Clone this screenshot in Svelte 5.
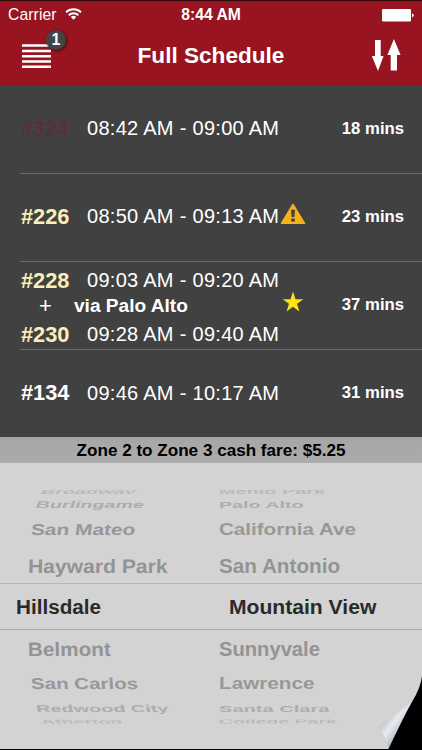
<script>
  let title = 'Full Schedule';
  let alerts = 1;
  let fare = 'Zone 2 to Zone 3 cash fare: $5.25';

  let trips = [
    { legs: [{ train: '#324', kind: 'bullet', time: '08:42 AM - 09:00 AM' }], mins: 18 },
    { legs: [{ train: '#226', kind: 'limited', time: '08:50 AM - 09:13 AM' }], mins: 23, icon: 'warning' },
    {
      legs: [
        { train: '#228', kind: 'limited', time: '09:03 AM - 09:20 AM' },
        { train: '#230', kind: 'limited', time: '09:28 AM - 09:40 AM' }
      ],
      via: 'via Palo Alto',
      mins: 37,
      icon: 'star'
    },
    { legs: [{ train: '#134', kind: 'local', time: '09:46 AM - 10:17 AM' }], mins: 31 }
  ];

  // one entry per visible step of the wheel, the scales squash the labels
  let stops = [
    { from: 'Broadway', to: 'Menlo Park', level: 'up4', fromX: 0.96, toX: 0.96, y: 0.34, skew: -14 },
    { from: 'Burlingame', to: 'Palo Alto', level: 'up3', fromX: 0.95, toX: 0.95, y: 0.48, skew: -10 },
    { from: 'San Mateo', to: 'California Ave', level: 'up2', fromX: 1.01, toX: 0.995, y: 0.76, skew: -5 },
    { from: 'Hayward Park', to: 'San Antonio', level: 'up1', fromX: 1.02, toX: 1, y: 0.94, skew: -1 },
    { from: 'Hillsdale', to: 'Mountain View', level: 'current', fromX: 1, toX: 1.02, y: 1, skew: 0 },
    { from: 'Belmont', to: 'Sunnyvale', level: 'down1', fromX: 1, toX: 0.975, y: 0.94, skew: 1 },
    { from: 'San Carlos', to: 'Lawrence', level: 'down2', fromX: 0.99, toX: 1, y: 0.76, skew: 3 },
    { from: 'Redwood City', to: 'Santa Clara', level: 'down3', fromX: 0.96, toX: 0.97, y: 0.48, skew: 6 },
    { from: 'Atherton', to: 'College Park', level: 'down4', fromX: 0.94, toX: 0.94, y: 0.34, skew: 8 }
  ];

  function squash(x, y, skew) {
    return `transform: scale(${x}, ${y}) skewX(${skew}deg)`;
  }
</script>

<div class="screen">
  <header>
    <div class="status">
      <span class="carrier">Carrier
        <svg width="17" height="12" viewBox="0 0 17 12" fill="none" stroke="#fff" stroke-width="2">
          <path d="M1 4.4A10.8 10.8 0 0 1 16 4.4" />
          <path d="M3.7 7.2A7 7 0 0 1 13.3 7.2" />
          <path d="M8.5 11.7L5.8 9A3.9 3.9 0 0 1 11.2 9Z" fill="#fff" stroke="none" />
        </svg>
      </span>
      <span class="clock">8:44 AM</span>
      <svg class="battery" width="32" height="13" viewBox="0 0 32 13" fill="#fff">
        <rect x="0" y="0" width="29" height="12.5" rx="1.3" />
        <path d="M30 4.2Q31.7 4.8 31.7 6.3T30 8.4Z" />
      </svg>
    </div>
    <nav>
      <div class="menu">
        <svg width="29" height="24" viewBox="0 0 29 24" stroke="#fff" stroke-width="2.5">
          <path d="M0 1.6H29M0 6.9H29M0 12.2H29M0 17.5H29M0 22.8H29" />
        </svg>
        <span class="badge">{alerts}</span>
      </div>
      <h1>{title}</h1>
      <svg class="swap" width="30" height="34" viewBox="0 0 30 34" fill="#fff">
        <path d="M4 1H9.700V17H12.600L7 32L.8 17H4Z" />
        <path d="M22.900 0L29.600 16H26V31.600H19.700V16H16.400Z" />
      </svg>
    </nav>
  </header>

  <ul>
    {#each trips as trip}
      <li>
        <div class="legs" class:double={trip.legs.length > 1}>
          {#each trip.legs as leg, i}
            {#if i > 0}
              <div class="via"><span>+</span>{trip.via}</div>
            {/if}
            <div class="leg">
              <span class="train {leg.kind}">{leg.train}</span>
              <span class="time">{leg.time}</span>
            </div>
          {/each}
        </div>
        <div class="mark {trip.icon}">
          {#if trip.icon === 'warning'}
            <svg width="26" height="22" viewBox="0 0 26 22">
              <path d="M13 1.6L24.3 20.2H1.7Z" fill="#f5b21a" stroke="#f5b21a" stroke-width="1.8" stroke-linejoin="round" />
              <path d="M11 6.8H15L14.4 14H11.6Z" fill="#414141" />
              <rect x="11.2" y="15.4" width="3.6" height="3.2" rx=".6" fill="#414141" />
            </svg>
          {:else if trip.icon === 'star'}
            <svg width="22" height="22" viewBox="0 0 22 22">
              <path d="M11 .6L13.5 8.2H21.4L15 12.8L17.4 20.5L11 15.8L4.6 20.5L7 12.8L.6 8.2H8.5Z" fill="#ffe414" />
            </svg>
          {/if}
        </div>
        <div class="mins">{trip.mins} mins</div>
      </li>
    {/each}
  </ul>

  <div class="fare">{fare}</div>

  <div class="picker">
    {#each stops as s}
      <div class="stop {s.level}">
        <span class="from" style={squash(s.fromX, s.y, s.skew)}>{s.from}</span>
        <span class="to" style={squash(s.toX, s.y, 0)}>{s.to}</span>
      </div>
    {/each}
    <svg class="curl" width="46" height="75" viewBox="0 0 46 75">
      <defs>
        <linearGradient id="page" x1="14" y1="42" x2="30" y2="54" gradientUnits="userSpaceOnUse">
          <stop offset="0" stop-color="#c9ced5" />
          <stop offset=".35" stop-color="#e6ebf0" />
          <stop offset=".65" stop-color="#ccd3da" />
          <stop offset="1" stop-color="#a5adb5" />
        </linearGradient>
      </defs>
      <path d="M37 26Q33 32 3.5 50.5Q2 52 3 54Q9 61 12.5 75L28 52Z" fill="url(#page)" />
      <path d="M46 2Q44.5 14 36.5 27Q28 42 12.5 75H46Z" fill="#000" />
    </svg>
  </div>
</div>

<style>
  :global(body) {
    margin: 0;
    background: #000;
  }

  .screen {
    width: 422px;
    height: 750px;
    overflow: hidden;
    display: flex;
    flex-direction: column;
    box-sizing: border-box;
    border-bottom: 1px solid #000;
    font-family: "Liberation Sans", Arial, sans-serif;
    color: #fff;
  }

  header {
    height: 86px;
    flex: none;
    box-sizing: border-box;
    border-top: 1px solid #30070b;
    background: #981421;
  }

  .status {
    display: grid;
    grid-template-columns: 1fr auto 1fr;
    align-items: center;
    height: 28px;
    padding: 0 8px;
    font-size: 15.7px;
  }

  .carrier {
    display: flex;
    align-items: center;
    gap: 8px;
    letter-spacing: 0.1px;
  }

  .carrier svg {
    margin-bottom: 3px;
  }

  .clock {
    font-weight: bold;
  }

  .battery {
    justify-self: end;
  }

  nav {
    display: grid;
    grid-template-columns: 1fr auto 1fr;
    align-items: center;
    height: 54px;
    padding: 0 21px 0 22px;
  }

  .menu {
    position: relative;
    width: 29px;
    height: 24px;
  }

  .menu svg {
    display: block;
  }

  .badge {
    position: absolute;
    left: 24px;
    top: -14px;
    width: 20px;
    height: 20px;
    border-radius: 50%;
    background: #444;
    box-shadow: 1px 1px 3px rgba(0, 0, 0, 0.6);
    font-size: 16px;
    font-weight: bold;
    line-height: 20px;
    text-align: center;
  }

  h1 {
    margin: 0 1px 0 0;
    font-size: 22.6px;
    line-height: 26px;
  }

  .swap {
    justify-self: end;
  }

  ul {
    margin: 0;
    padding: 0 0 0 20px;
    height: 351px;
    flex: none;
    overflow: hidden;
    list-style: none;
    background: #414141;
  }

  li {
    display: flex;
    align-items: center;
    height: 88px;
    box-sizing: border-box;
    padding: 0 18px 2px 1px;
    border-bottom: 1px solid #6a6a6a;
  }

  li:last-child {
    border-bottom: none;
  }

  .legs {
    width: 259px;
    white-space: nowrap;
  }

  .double {
    margin-top: 6px;
  }

  .leg {
    display: flex;
    align-items: center;
    height: 26px;
  }

  .train {
    width: 66px;
    font-size: 21.8px;
    font-weight: bold;
  }

  .bullet {
    color: #5b2f37;
  }

  .limited {
    color: #fbeeb8;
  }

  .time {
    font-size: 20px;
    letter-spacing: 0.29px;
  }

  .via {
    display: flex;
    align-items: center;
    height: 28px;
    padding-bottom: 3px;
    box-sizing: border-box;
    font-size: 19.1px;
    font-weight: bold;
  }

  .via span {
    width: 35px;
    padding-left: 18px;
    font-size: 22px;
    font-weight: normal;
  }

  .mark {
    display: flex;
    justify-content: center;
    width: 26px;
    margin-bottom: 6px;
  }

  .mins {
    margin-left: auto;
    font-size: 16.7px;
    font-weight: bold;
  }

  .fare {
    height: 26px;
    flex: none;
    line-height: 27px;
    text-align: center;
    font-size: 17.1px;
    font-weight: bold;
    color: #000;
    background: linear-gradient(#a6a6a6, #ababab);
  }

  .picker {
    position: relative;
    flex: 1;
    padding-top: 21.5px;
    background: #d3d3d3;
    font-size: 20.7px;
    font-weight: bold;
  }

  .stop {
    display: grid;
    grid-template-columns: 219px 1fr;
    grid-template-rows: 100%;
    align-items: center;
    box-sizing: border-box;
    line-height: 24px;
    white-space: nowrap;
  }

  .stop span {
    justify-self: start;
    transform-origin: left center;
  }

  .current {
    height: 47px;
    border-top: 1px solid #b5b5b5;
    border-bottom: 1px solid #a8a8a8;
    color: #2a2a2a;
  }

  .current .from {
    margin-left: 16px;
  }

  .current .to {
    margin-left: 10px;
  }

  .up1, .down1 {
    height: 37px;
    color: #939393;
  }

  .up1 {
    height: 34px;
  }

  .up2, .down2 {
    height: 34px;
    color: #989898;
  }

  .up2 {
    height: 37.5px;
  }

  .up3, .down3 {
    height: 16.6px;
    color: #adadad;
  }

  .up3 {
    height: 13px;
  }

  .up4, .down4 {
    height: 14px;
    color: #bababa;
    clip-path: inset(5.5px 0 4.5px);
  }

  .down4 {
    height: 7.8px;
    clip-path: inset(2px 0);
  }

  .up1 .from, .down1 .from {
    margin-left: 27.5px;
  }

  .up2 .from, .down2 .from {
    margin-left: 30.5px;
  }

  .up3 .from, .down3 .from {
    margin-left: 35.5px;
  }

  .up4 .from, .down4 .from {
    margin-left: 41px;
  }

  .curl {
    position: absolute;
    right: 0;
    bottom: 0;
  }
</style>
